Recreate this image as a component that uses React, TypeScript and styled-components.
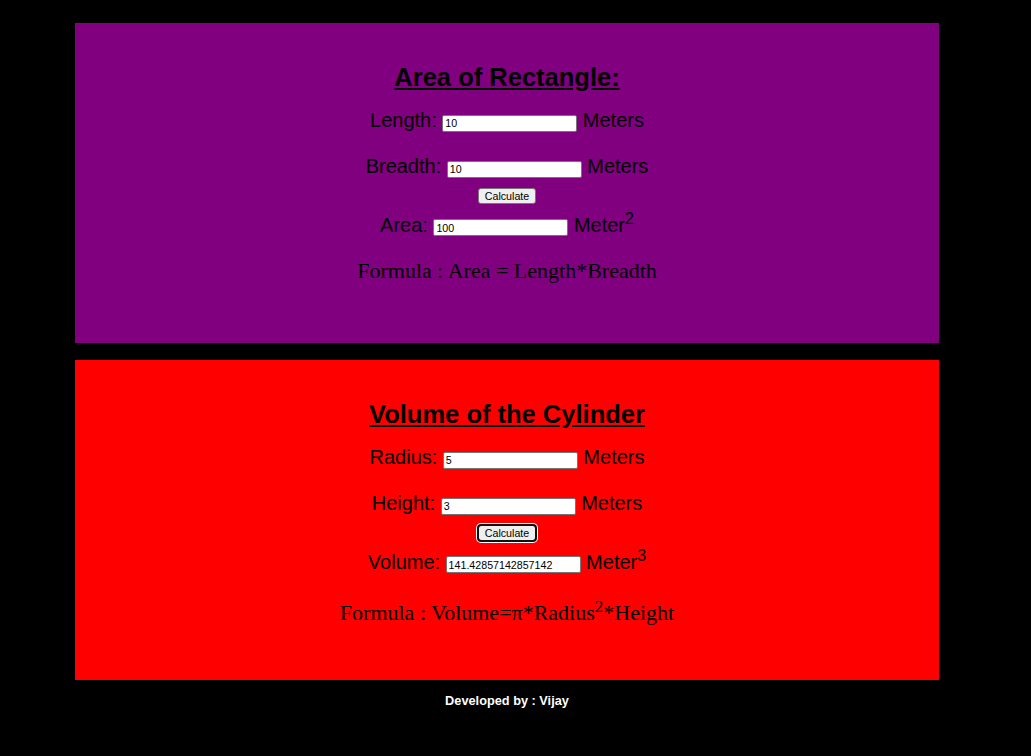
import React from "react";
import styled, { createGlobalStyle } from "styled-components";

const Global = createGlobalStyle`
  html, body { margin: 0; padding: 0; background: #000; }
  body { font-family: "Liberation Sans", Arial, sans-serif; }
`;

const Page = styled.div`
  width: 1031px;
  min-height: 756px;
  background: #000;
  padding-top: 23px;
  box-sizing: border-box;
  display: flex;
  flex-direction: column;
`;

const Panel = styled.section<{ $bg: string; $gap?: number }>`
  width: 864px;
  height: 320px;
  margin-left: 75px;
  margin-bottom: ${(p) => p.$gap ?? 0}px;
  background: ${(p) => p.$bg};
  color: #000;
  display: flex;
  flex-direction: column;
  align-items: center;
  padding-top: 39.5px;
  box-sizing: border-box;
`;

const Heading = styled.h2`
  margin: 0 0 17.5px;
  font-family: "Liberation Sans", Arial, sans-serif;
  font-size: 25.5px;
  font-weight: bold;
  text-decoration: underline;
  line-height: normal;
`;

const Row = styled.div<{ $mb: number }>`
  display: flex;
  align-items: baseline;
  justify-content: center;
  gap: 5.5px;
  height: 23px;
  margin-bottom: ${(p) => p.$mb}px;
  font-size: 20px;
  line-height: normal;
  white-space: nowrap;
`;

const Field = styled.input`
  width: 135px;
  height: 17px;
  box-sizing: border-box;
  padding: 1px 2px;
  border: 1px solid #767676;
  border-radius: 2px;
  background: #fff;
  color: #000;
  font-family: "Liberation Sans", Arial, sans-serif;
  font-size: 10.67px;
  outline: none;
`;

const ButtonRow = styled.div`
  display: flex;
  justify-content: center;
  height: 16px;
  margin-bottom: 9.6px;
`;

const CalcButton = styled.button<{ $focused?: boolean }>`
  height: 16px;
  padding: 0 6px;
  box-sizing: border-box;
  background: #efefef;
  border: 1px solid #767676;
  border-radius: 3px;
  color: #000;
  font-family: "Liberation Sans", Arial, sans-serif;
  font-size: 10.67px;
  line-height: 14px;
  ${(p) =>
    p.$focused
      ? `outline: 2px solid #101010; outline-offset: -1px; box-shadow: 0 0 0 2px #fff;`
      : `outline: none;`}
`;

const Unit = styled.span`
  & sup {
    font-size: 16px;
    vertical-align: super;
    line-height: 0;
  }
`;

const Formula = styled.p<{ $shift?: number }>`
  margin: ${(p) => p.$shift ?? 0}px 0 0;
  font-family: "Liberation Serif", "Times New Roman", serif;
  font-size: 22px;
  line-height: normal;
  white-space: nowrap;
  & sup {
    font-size: 17px;
    vertical-align: super;
    line-height: normal;
  }
`;

const Footer = styled.footer`
  margin-top: 13px;
  margin-left: 75px;
  width: 864px;
  text-align: center;
  color: #fff;
  font-family: "Liberation Sans", Arial, sans-serif;
  font-weight: bold;
  font-size: 12.75px;
`;

export default function App() {
  return (
    <>
      <Global />
      <Page>
        <Panel $bg="#800080" $gap={17}>
          <Heading>Area of Rectangle:</Heading>
          <Row $mb={23}>
            <span>Length:</span>
            <Field defaultValue="10" />
            <Unit>Meters</Unit>
          </Row>
          <Row $mb={10.4}>
            <span>Breadth:</span>
            <Field defaultValue="10" />
            <Unit>Meters</Unit>
          </Row>
          <ButtonRow>
            <CalcButton>Calculate</CalcButton>
          </ButtonRow>
          <Row $mb={21}>
            <span>Area:</span>
            <Field defaultValue="100" />
            <Unit>
              Meter<sup>2</sup>
            </Unit>
          </Row>
          <Formula>Formula : Area = Length*Breadth</Formula>
        </Panel>
        <Panel $bg="#ff0000">
          <Heading>Volume of the Cylinder</Heading>
          <Row $mb={23}>
            <span>Radius:</span>
            <Field defaultValue="5" />
            <Unit>Meters</Unit>
          </Row>
          <Row $mb={10.4}>
            <span>Height:</span>
            <Field defaultValue="3" />
            <Unit>Meters</Unit>
          </Row>
          <ButtonRow>
            <CalcButton $focused>Calculate</CalcButton>
          </ButtonRow>
          <Row $mb={21}>
            <span>Volume:</span>
            <Field defaultValue="141.42857142857142" />
            <Unit>
              Meter<sup>3</sup>
            </Unit>
          </Row>
          <Formula $shift={2}>
            Formula : Volume=π*Radius<sup>2</sup>*Height
          </Formula>
        </Panel>
        <Footer>Developed by : Vijay</Footer>
      </Page>
    </>
  );
}
